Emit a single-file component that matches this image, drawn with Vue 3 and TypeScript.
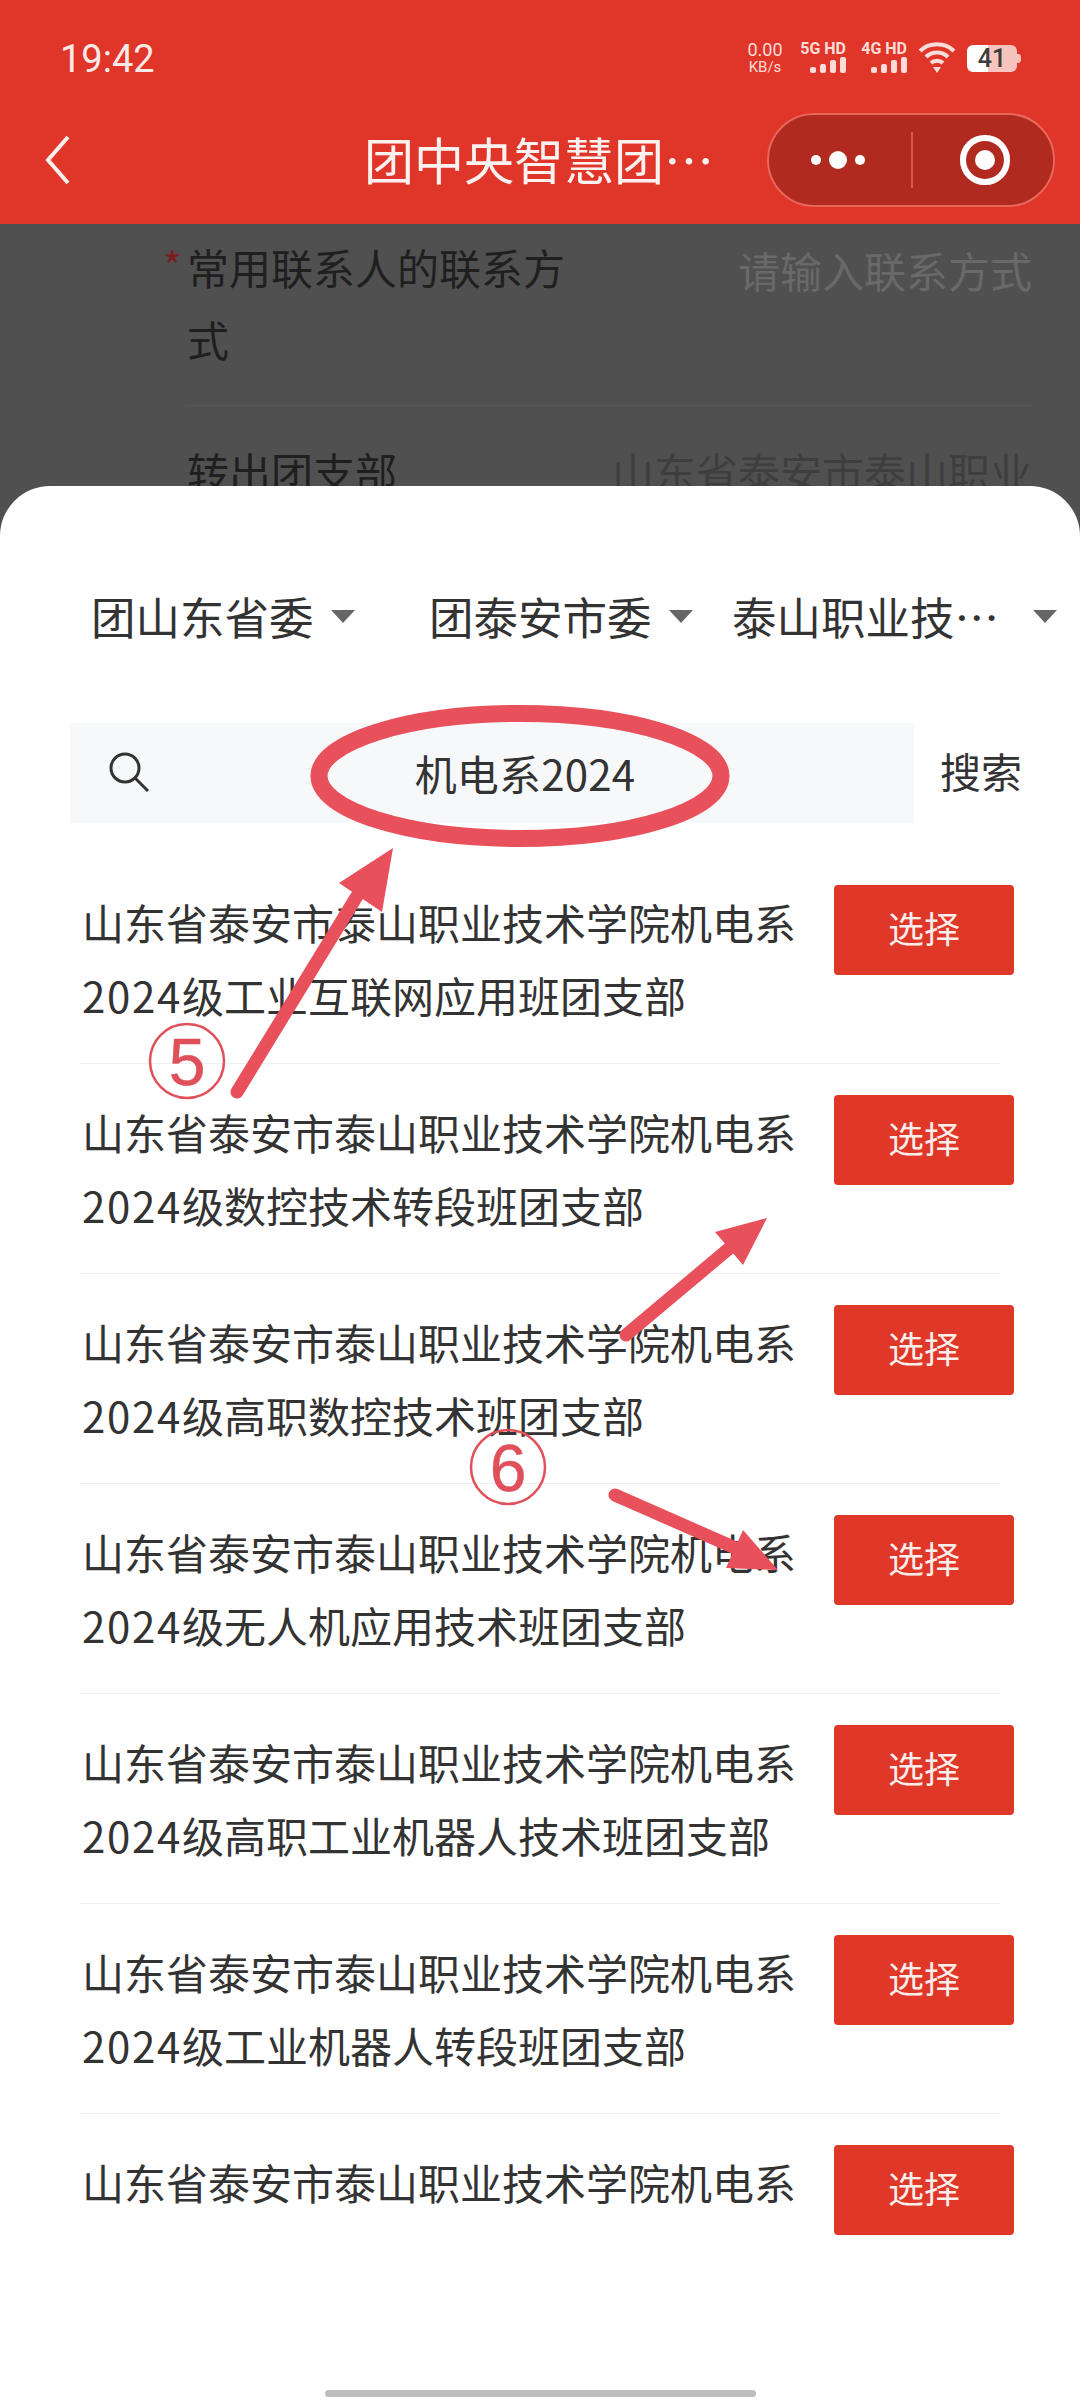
<template>
  <div class="screen">
    <header class="head">
      <div class="status">
        <span class="time">19:42</span>
        <div class="status-right">
          <div class="speed"><span>0.00</span><small>KB/s</small></div>
          <div v-for="n in ['5G HD', '4G HD']" :key="n" class="net">
            <span>{{ n }}</span>
            <svg width="36" height="16" viewBox="0 0 36 16">
              <rect x="0" y="10" width="6" height="6" rx="2" />
              <rect x="10" y="7" width="6" height="9" rx="2" />
              <rect x="20" y="3" width="6" height="13" rx="2" />
              <rect x="30" y="0" width="6" height="16" rx="2" />
            </svg>
          </div>
          <svg class="wifi" width="38" height="32" viewBox="0 0 38 32">
            <path d="M2 10C11 1 27 1 36 10" />
            <path d="M8 16C14 10 24 10 30 16" />
            <path d="M13 22C16 19 22 19 25 22" />
            <polygon points="15,26 23,26 19,32" class="wifi-tip" />
          </svg>
          <div class="battery"><span>41</span></div>
        </div>
      </div>
      <nav class="nav">
        <svg class="back" width="26" height="50" viewBox="0 0 26 50">
          <path d="M23 2L3 25L23 48" />
        </svg>
        <div class="title">团中央智慧团…</div>
        <div class="capsule">
          <div class="dots"><i></i><b></b><i></i></div>
          <div class="cap-sep"></div>
          <div class="target"><i></i></div>
        </div>
      </nav>
    </header>

    <section class="form">
      <div class="form-row first">
        <div class="label"><em>*</em>常用联系人的联系方式</div>
        <div class="placeholder">请输入联系方式</div>
      </div>
      <div class="form-row">
        <div class="label">转出团支部</div>
        <div class="value">山东省泰安市泰山职业</div>
      </div>
    </section>

    <section class="sheet">
      <div class="tabs">
        <div v-for="t in tabs" :key="t" class="tab">
          <span>{{ t }}</span><i class="caret"></i>
        </div>
      </div>
      <div class="search">
        <div class="search-box">
          <svg width="42" height="42" viewBox="0 0 42 42">
            <circle cx="17" cy="16" r="14" />
            <path d="M27 26L40 39" />
          </svg>
          <div class="query">机电系2024</div>
        </div>
        <div class="search-btn">搜索</div>
      </div>
      <div class="list">
        <div v-for="(row, i) in rows" :key="i" class="item">
          <div class="row">
            <div class="name">
              <div>山东省泰安市泰山职业技术学院机电系</div>
              <div v-if="row"><span class="num">2024</span>{{ row }}</div>
            </div>
            <div class="pick">选择</div>
          </div>
          <div v-if="row" class="sep"></div>
        </div>
      </div>
      <div class="home"></div>
    </section>

    <svg class="marks" width="1080" height="2400" viewBox="0 0 1080 2400">
      <ellipse cx="520" cy="776" rx="201" ry="62.500" class="ring" />
      <path d="M237 1092L368 878" class="shaft" />
      <polygon points="393,848 339,883 382,912" class="head-tip" />
      <circle cx="187" cy="1061" r="37" class="badge" />
      <text x="187" y="1085" class="digit">5</text>
      <path d="M626 1335L732 1246" class="shaft" />
      <polygon points="767,1218 715,1232 743,1265" class="head-tip" />
      <circle cx="508" cy="1467" r="37" class="badge" />
      <text x="508" y="1491" class="digit">6</text>
      <path d="M615 1495L740 1550" class="shaft" />
      <polygon points="778,1570 743,1530 726,1568" class="head-tip" />
    </svg>
  </div>
</template>

<script setup lang="ts">
const tabs: string[] = ['团山东省委', '团泰安市委', '泰山职业技…'];

const rows: string[] = [
  '级工业互联网应用班团支部',
  '级数控技术转段班团支部',
  '级高职数控技术班团支部',
  '级无人机应用技术班团支部',
  '级高职工业机器人技术班团支部',
  '级工业机器人转段班团支部',
  '',
];
</script>

<style>
html, body { margin: 0; background: #fff; }
</style>

<style scoped>
.screen {
  position: relative;
  width: 1080px;
  height: 2400px;
  overflow: hidden;
  background: #505050;
  font-family: "Noto Sans CJK SC", "Noto Sans", sans-serif;
}

.head { height: 224px; background: #e0362a; color: #fff; }
.status { height: 113px; display: flex; justify-content: space-between; box-sizing: border-box; padding: 36px 63px 0 60px; }
.time { font: 400 38px/46px Roboto, sans-serif; color: #fbe9e7; }
.status-right { display: flex; align-items: flex-start; gap: 11px; margin-top: 4px; color: #fbdcd8; }
.speed { display: flex; flex-direction: column; align-items: center; font-family: Roboto, sans-serif; font-size: 18px; line-height: 18px; width: 40px; margin-top: 1px; }
.speed small { font-size: 15px; line-height: 16px; }
.net { display: flex; flex-direction: column; align-items: flex-end; width: 50px; font: 700 16px/17px Roboto, sans-serif; white-space: nowrap; }
.net svg { fill: #fbdcd8; }
.wifi { margin-top: 1px; }
.wifi path { fill: none; stroke: #fbdcd8; stroke-width: 4; }
.wifi .wifi-tip { fill: #fbdcd8; }
.battery {
  width: 50px;
  height: 27px;
  margin-top: 5px;
  border-radius: 6px;
  background: linear-gradient(90deg, #fff 0 42%, #f6c3bd 42%);
  color: #3c3c3c;
  text-align: center;
  font: 500 25px/27px Roboto, sans-serif;
  position: relative;
}
.battery::after { content: ""; position: absolute; right: -4px; top: 9px; width: 4px; height: 9px; background: #f6c3bd; border-radius: 0 3px 3px 0; }

.nav { display: grid; grid-template-columns: 1fr auto 1fr; align-items: center; height: 94px; padding: 0 25px 0 45px; }
.back { justify-self: start; }
.back path { fill: none; stroke: #fbeeec; stroke-width: 4; }
.title { font-size: 50px; line-height: 94px; color: #fdf2f0; margin-left: -22px; margin-top: -4px; }
.capsule {
  justify-self: end;
  width: 288px;
  height: 94px;
  box-sizing: border-box;
  display: flex;
  align-items: center;
  border: 2px solid #e9665b;
  border-radius: 47px;
  background: #b12a20;
}
.dots { width: 142px; display: flex; align-items: center; justify-content: center; gap: 8px; margin-left: -2px; }
.dots i { width: 10px; height: 10px; border-radius: 50%; background: #fff; }
.dots b { width: 18px; height: 18px; border-radius: 50%; background: #fff; }
.cap-sep { width: 2px; height: 56px; background: #d4584c; margin-left: 2px; }
.target { flex: 1; display: flex; align-items: center; justify-content: center; }
.target i { width: 20px; height: 20px; border-radius: 50%; background: #fff; box-shadow: 0 0 0 9px #b12a20, 0 0 0 15px #fff; margin-left: 3px; }

.form { padding-left: 187px; padding-right: 48px; font-size: 42px; line-height: 72px; color: #1f1f1f; margin-top: -3px; }
.form-row { display: flex; justify-content: space-between; padding: 29px 0 30px; border-bottom: 1px solid #575757; }
.form-row.first { padding-top: 10px; }
.label { position: relative; width: 380px; }
.label em { position: absolute; left: -24px; top: -2px; font-style: normal; color: #7c1d1d; font-size: 40px; }
.placeholder { color: #696969; margin-top: 3px; }
.value { color: #3e3e3e; }

.sheet {
  position: absolute;
  left: 0;
  right: 0;
  top: 486px;
  bottom: 0;
  box-sizing: border-box;
  padding-top: 98px;
  background: #fff;
  border-radius: 50px 50px 0 0;
  color: #333;
}
.tabs { display: grid; grid-template-columns: 338px 303px 1fr; padding-left: 91px; font-size: 44.500px; line-height: 64px; }
.tab { display: flex; align-items: center; white-space: nowrap; }
.caret { width: 0; height: 0; margin-left: 17px; border-left: 12px solid transparent; border-right: 12px solid transparent; border-top: 13px solid #666; }
.tab:last-child .caret { margin-left: 34px; }

.search { display: flex; align-items: center; margin: 75px 0 0 70px; }
.search-box { width: 844px; height: 100px; display: flex; align-items: center; box-sizing: border-box; padding: 0 14px 0 38px; background: #f7f8f9; }
.search-box svg { flex-shrink: 0; margin-top: 0; }
.search-box circle, .search-box path { fill: none; stroke: #333; stroke-width: 3; }
.query { flex: 1; text-align: center; font-size: 42px; line-height: 100px; letter-spacing: 0.200px; }
.search-btn { margin-left: 26px; font-size: 41px; line-height: 60px; margin-top: -6px; }

.num { letter-spacing: 1.700px; }
.list { margin: 31px 0 0 80px; width: 934px; }
.item { height: 210px; }
.row { height: 209px; display: flex; justify-content: space-between; align-items: flex-start; }
.name { padding: 31px 0 0 2px; font-size: 42px; line-height: 73px; white-space: nowrap; }
.pick { width: 180px; height: 90px; margin-top: 31px; border-radius: 4px; background: #df3829; color: #fdeeec; text-align: center; font-size: 36px; line-height: 85px; }
.sep { width: 920px; height: 1px; background: #eee; }

.home { position: absolute; left: 325px; top: 1904px; width: 431px; height: 7px; border-radius: 4px; background: #bdbdbd; }

.marks { position: absolute; left: 0; top: 0; pointer-events: none; }
.ring { fill: none; stroke: #e8505b; stroke-width: 17; }
.shaft { fill: none; stroke: #e8505b; stroke-width: 13; stroke-linecap: round; }
.head-tip { fill: #e8505b; }
.badge { fill: none; stroke: #e0505a; stroke-width: 2.500; }
.digit { fill: #e0505a; stroke: #e0505a; stroke-width: 0.500px; font-family: "Liberation Sans", sans-serif; font-size: 66px; text-anchor: middle; }
</style>
